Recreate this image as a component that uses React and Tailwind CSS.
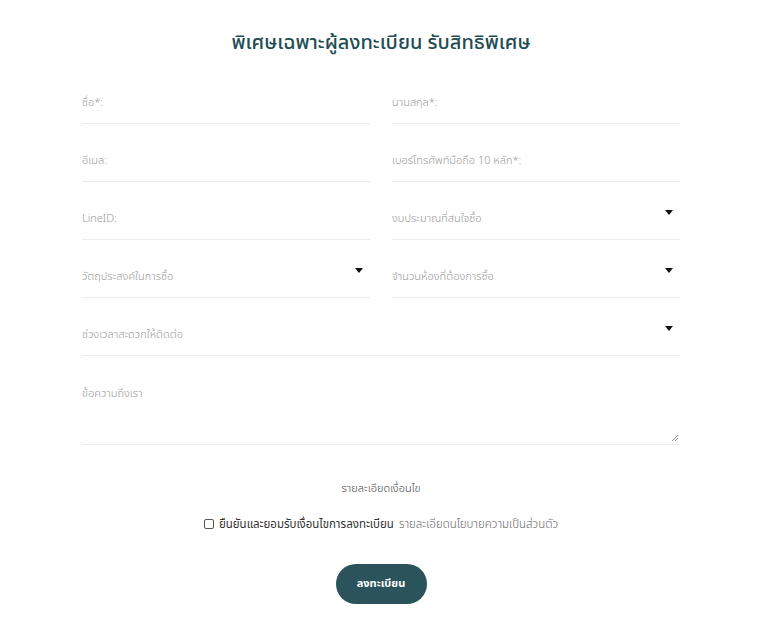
import React from 'react';

const font = { fontFamily: '"Noto Sans Thai", "Noto Sans", "Liberation Sans", sans-serif' };

const Field = ({ label, select }) => (
  <div className="relative h-[40px] border-b border-[#ececec] flex items-center">
    <span className="text-[11px] font-light text-[#999]">{label}</span>
    {select && (
      <span className="absolute right-[7px] top-[10px] w-0 h-0 border-l-[4px] border-r-[4px] border-t-[5px] border-l-transparent border-r-transparent border-t-[#111]" />
    )}
  </div>
);

const App = () => {
  return (
    <div className="bg-white min-h-[627px] w-full" style={font}>
      <div className="w-[598px] ml-[82px] pt-[30px]">
        <h1 className="text-center text-[20px] leading-[26px] font-medium text-[#1f4d53]">
          พิเศษเฉพาะผู้ลงทะเบียน รับสิทธิพิเศษ
        </h1>

        <div className="mt-[28px] grid grid-cols-2 gap-x-[22px] gap-y-[18px]">
          <Field label="ชื่อ*:" />
          <Field label="นามสกุล*:" />
          <Field label="อีเมล:" />
          <Field label="เบอร์โทรศัพท์มือถือ 10 หลัก*:" />
          <Field label="LineID:" />
          <Field label="งบประมาณที่สนใจซื้อ" select />
          <Field label="วัตถุประสงค์ในการซื้อ" select />
          <Field label="จำนวนห้องที่ต้องการซื้อ" select />
          <div className="col-span-2">
            <Field label="ช่วงเวลาสะดวกให้ติดต่อ" select />
          </div>
          <div className="col-span-2 relative h-[71px] border-b border-[#ececec] pt-[6px]">
            <span className="text-[11px] font-light text-[#999]">ข้อความถึงเรา</span>
            <svg className="absolute right-[1px] bottom-[2px]" width="8" height="8" viewBox="0 0 8 8">
              <path d="M7 1 L1 7 M7 4 L4 7" stroke="#888" strokeWidth="1" />
            </svg>
          </div>
        </div>

        <p className="mt-[36px] text-center text-[11px] font-light text-[#444]">รายละเอียดเงื่อนไข</p>

        <div className="mt-[18px] flex items-center justify-center gap-[5px] text-[11.5px]">
          <span className="w-[10px] h-[10px] border border-[#555] rounded-[2px] bg-white" />
          <span className="text-[#333]">ยืนยันและยอมรับเงื่อนไขการลงทะเบียน</span>
          <span className="text-[#666] font-light">รายละเอียดนโยบายความเป็นส่วนตัว</span>
        </div>

        <div className="mt-[31px] flex justify-center">
          <button className="w-[91px] h-[40px] rounded-full bg-[#2a535b] text-white text-[11px] font-bold">
            ลงทะเบียน
          </button>
        </div>
      </div>
    </div>
  );
};

export default App;
